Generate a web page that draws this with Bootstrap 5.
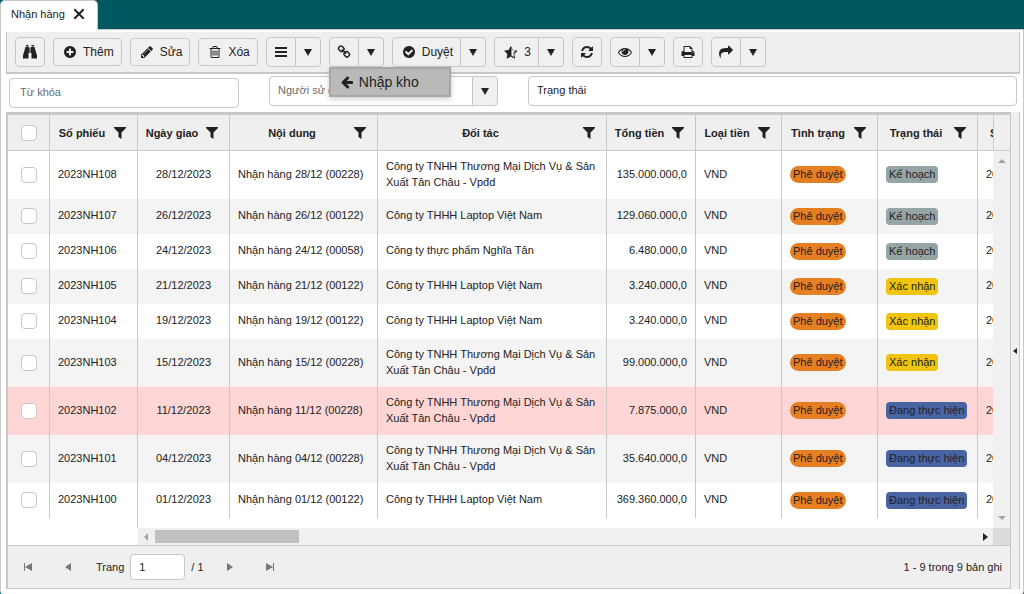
<!DOCTYPE html>
<html lang="vi">
<head>
<meta charset="utf-8">
<meta name="viewport" content="width=device-width, initial-scale=1">
<title>Nhận hàng</title>
<link href="https://cdn.jsdelivr.net/npm/bootstrap@5.3.0/dist/css/bootstrap.min.css" rel="stylesheet">
<style>
:root{--line:#c8c8c8;--panel:#efefef;--ink:#222;--teal:#005961}
body{font-family:"Liberation Sans",Arial,sans-serif;font-size:11px;line-height:16px;color:var(--ink);background:var(--teal)}
svg{display:block;fill:currentColor;flex:none}
.ic{width:14px;height:14px}
.tabs-bar{height:30px;margin-bottom:-1px;z-index:1}
.tab-item{width:98px;padding:0 12px 3px 10px;background:#fff;border:1px solid var(--line);border-bottom:0;border-radius:5px 5px 0 0}
.tab-item button{width:12px;height:12px}
.work{background:#fff;border:1px solid var(--line);border-radius:0 0 4px 4px;padding:2px 3px 5px 5px}
.tools{background:var(--panel);border:solid var(--line);border-width:0 1px 2px;padding:5px 8px;height:42px}
.tool{height:30px;font-size:12px;line-height:16px;padding:0 7px 0 9px;border:1px solid var(--line);border-radius:4px;background:#f0f0f0;color:var(--ink);display:flex;align-items:center;justify-content:center;gap:6px}
.tool-word{height:28px}
.tool span{padding-bottom:1px}
.tool-sq{width:30px;padding:0}
.btn-group>.tool-drop{width:25px;padding:0}
.btn-group>.tool-sq{flex:none}
.menu-pop{display:block;top:100%;left:0;z-index:5;margin:0;padding:0;min-width:122px;border:0;border-radius:0;box-shadow:0 2px 5px rgba(0,0,0,.2);background:#b9b9b9}
.menu-pop .dropdown-item{display:flex;align-items:center;gap:5px;height:30px;padding:0 9px;font-size:14px;line-height:18px;color:var(--ink);background:#b9b9b9;border:2px solid #a8a8a8}
.filters{background:#fff;padding:2px 3px 4px 3px;height:38px;gap:30px}
.filters .field{width:230px}
.fld{height:30px;min-height:0;padding:0 10px 2px;font-size:11px;line-height:16px;color:var(--ink);border:1px solid var(--line);border-radius:4px;background:#fff}
.fld::placeholder{color:#6c6c6c;opacity:1}
.fld.ink::placeholder{color:var(--ink)}
.field-a{margin-top:2px}
.field .fld{padding-left:8px}
.field-a .fld{padding-left:10px}
.filters .field-b{width:229px}
.filters .tool-drop{width:25px;padding:0}
.grid-wrap{border-left:1px solid var(--line)}
.grid-box{border:solid var(--line);border-width:3px 1px 1px}
.grid-view{overflow:hidden;background:#fff}
.data{width:1120px;table-layout:fixed;border-collapse:separate;border-spacing:0}
.data th,.data td{border-right:1px solid var(--line)}
.data th{height:36px;padding:0;background:var(--panel);border-bottom:1px solid var(--line);font-weight:700;vertical-align:middle}
.th-in{padding-right:11px}
.th-in span{flex:1;text-align:center;white-space:nowrap}
.data td{height:35px;padding:0 8px 1px;vertical-align:middle}
.data tr.tall td{height:48px}
.data td.txt,.data tr.tall td.txt{padding-bottom:3px}
.data tbody tr:nth-child(even){background:#f4f4f4}
.data tbody tr.late{background:#ffd6d6}
.form-check-input.tick{float:none;display:block;width:16px;height:16px;margin:0 0 0 5px;border:1px solid #c8c8c8;border-radius:4px;background-color:#fff}
.data th .tick{margin-left:13px}
.tag{display:block;width:fit-content;height:17px;padding:0 3px;line-height:17px;border-radius:4px;white-space:nowrap}
.tag-round{border-radius:9px;background:#e67e22}
.tag-plan{background:#95a5a6}.tag-ok{background:#f1c40f}.tag-run{background:#4864a3}
.vbar{width:17px;background:#f0f0f0}
.vbar-top{height:36px;background:var(--panel);border-left:1px solid var(--line);border-bottom:1px solid var(--line)}
.dim{color:#a3a3a3}
.lock{width:130px;border-right:1px solid var(--line);background:#fff}
.pad-row{height:10px;background:#fff}
.hbar{height:17px;background:#f0f0f0}
.hbar .space{width:130px;background:#fff}
.thumb{width:17%;height:13px;background:#c1c1c1}
.corner{width:17px;background:#dcdcdc}
.pager{height:43px;background:var(--panel);border-top:1px solid var(--line)}
.pager label,.pager span{padding-bottom:1px}
.pg{width:32px;height:24px;color:#777}
.pager .page-no{width:55px;height:26px;padding:0 8px 1px;margin:0 2px 0 6px}
.split-bar{width:9px;background:var(--panel);border-right:1px solid var(--line)}
</style>
</head>
<body class="min-vh-100 d-flex flex-column">
<svg width="0" height="0" class="position-absolute" aria-hidden="true">
<symbol id="i-caret" viewBox="0 0 8 8"><path d="M0 1h8L4 8z"/></symbol>
<symbol id="i-filter" viewBox="0 0 12 12"><path d="M0 0h12v1L7.500 5.500V12L4.500 10V5.500L0 1z"/></symbol>
<symbol id="i-bino" viewBox="0 0 14 14"><path d="M3 0h2.500v1.500H3zM8.500 0H11v1.500H8.500zM2.500 2H6V8H5.500V13.500H0V10.500zM8 2h3.500L14 10.500V13.500H8.500V8H8zM6.400 2.500h1.200v5.500H6.400z"/></symbol>
<symbol id="i-plus" viewBox="0 0 1792 1792"><path d="M1344 960v-128q0-26-19-45t-45-19h-256v-256q0-26-19-45t-45-19h-128q-26 0-45 19t-19 45v256h-256q-26 0-45 19t-19 45v128q0 26 19 45t45 19h256v256q0 26 19 45t45 19h128q26 0 45-19t19-45v-256h256q26 0 45-19t19-45zm320-64q0 209-103 385.500t-279.500 279.500-385.500 103-385.500-103-279.500-279.500-103-385.500 103-385.500 279.500-279.500 385.500-103 385.500 103 279.500 279.500 103 385.500z"/></symbol>
<symbol id="i-check" viewBox="0 0 1792 1792"><path d="M1412 734q0-28-18-46l-91-90q-19-19-45-19t-45 19l-408 407-226-226q-19-19-45-19t-45 19l-91 90q-18 18-18 46 0 27 18 45l362 362q19 19 45 19 27 0 46-19l543-543q18-18 18-45zm252 162q0 209-103 385.500t-279.500 279.500-385.500 103-385.500-103-279.500-279.500-103-385.500 103-385.500 279.500-279.500 385.500-103 385.500 103 279.500 279.500 103 385.500z"/></symbol>
<symbol id="i-pencil" viewBox="0 0 1792 1792"><path d="M491 1536l91-91-235-235-91 91v107h128v128h107zm523-928q0-22-22-22-10 0-17 7l-542 542q-7 7-7 17 0 22 22 22 10 0 17-7l542-542q7-7 7-17zm-54-192l416 416-832 832h-416v-416zm683 96q0 53-37 90l-166 166-416-416 166-165q36-38 90-38 53 0 91 38l235 234q37 39 37 91z"/></symbol>
<symbol id="i-trash" viewBox="0 0 1792 1792"><path d="M704 736v576q0 14-9 23t-23 9h-64q-14 0-23-9t-9-23v-576q0-14 9-23t23-9h64q14 0 23 9t9 23zm256 0v576q0 14-9 23t-23 9h-64q-14 0-23-9t-9-23v-576q0-14 9-23t23-9h64q14 0 23 9t9 23zm256 0v576q0 14-9 23t-23 9h-64q-14 0-23-9t-9-23v-576q0-14 9-23t23-9h64q14 0 23 9t9 23zm128 724v-948h-896v948q0 22 7 40.500t14.500 27 10.500 8.500h832q3 0 10.500-8.500t14.500-27 7-40.500zm-672-1076h448l-48-117q-7-9-17-11h-317q-10 2-17 11zm928 32v64q0 14-9 23t-23 9h-96v948q0 83-47 143.500t-113 60.500h-832q-66 0-113-58.500t-47-141.500v-952h-96q-14 0-23-9t-9-23v-64q0-14 9-23t23-9h309l70-167q15-37 54-63t79-26h320q40 0 79 26t54 63l70 167h309q14 0 23 9t9 23z"/></symbol>
<symbol id="i-bars" viewBox="0 0 14 14"><path d="M1 2h12v2H1zM1 6h12v2H1zM1 10h12v2H1z"/></symbol>
<symbol id="i-link" viewBox="0 0 1792 1792"><path d="M1520 1216q0-40-28-68l-208-208q-28-28-68-28-42 0-72 32 3 3 19 18.500t21.500 21.500 15 19 13 25.500 3.500 27.500q0 40-28 68t-68 28q-15 0-27.500-3.500t-25.500-13-19-15-21.500-21.500-18.500-19q-33 31-33 73 0 40 28 68l206 207q27 27 68 27 40 0 68-26l147-146q28-28 28-67zm-703-705q0-40-28-68l-206-207q-28-28-68-28-39 0-68 27l-147 146q-28 28-28 67 0 40 28 68l208 208q27 27 68 27 42 0 72-31-3-3-19-18.500t-21.500-21.500-15-19-13-25.500-3.500-27.500q0-40 28-68t68-28q15 0 27.500 3.500t25.500 13 19 15 21.500 21.500 18.500 19q33-31 33-73zm895 705q0 120-85 203l-147 146q-83 83-203 83-121 0-204-85l-206-207q-83-83-83-203 0-123 88-209l-88-88q-86 88-208 88-120 0-204-84l-208-208q-84-84-84-204t85-203l147-146q83-83 203-83 121 0 204 85l206 207q83 83 83 203 0 123-88 209l88 88q86-88 208-88 120 0 204 84l208 208q84 84 84 204z"/></symbol>
<symbol id="i-left" viewBox="0 0 1792 1792"><path d="M1664 896v128q0 53-32.500 90.500t-84.500 37.500h-704l293 294q38 36 38 90t-38 90l-75 76q-37 37-90 37-52 0-91-37l-651-652q-37-37-37-90 0-52 37-91l651-650q38-38 91-38 52 0 90 38l75 74q38 38 38 91t-38 91l-293 293h704q52 0 84.500 37.500t32.500 90.500z"/></symbol>
<symbol id="i-star" viewBox="0 0 1792 1792"><path d="M1250 957l238-232-329-48-41-6-18-38-147-297v1028l36 19 295 155-56-328-8-41zm428-146l-363 354 86 500q5 33-6 51.500t-34 18.500q-17 0-40-12l-449-236-449 236q-23 12-40 12-23 0-34-18.500t-6-51.500l86-500-364-354q-32-32-23-59.500t54-34.500l502-73 225-455q20-41 49-41 28 0 49 41l225 455 502 73q45 7 54 34.500t-24 59.500z"/></symbol>
<symbol id="i-refresh" viewBox="0 0 1792 1792"><path d="M1639 1056q0 5-1 7-64 268-268 434.500t-478 166.500q-146 0-282.500-55t-243.500-157l-129 129q-19 19-45 19t-45-19-19-45v-448q0-26 19-45t45-19h448q26 0 45 19t19 45-19 45l-137 137q71 66 161 102t187 36q134 0 250-65t186-179q11-17 53-117 8-23 30-23h192q13 0 22.500 9.500t9.500 22.500zm25-800v448q0 26-19 45t-45 19h-448q-26 0-45-19t-19-45 19-45l138-138q-148-137-349-137-134 0-250 65t-186 179q-11 17-53 117-8 23-30 23h-199q-13 0-22.500-9.500t-9.500-22.500v-7q65-268 270-434.500t480-166.500q146 0 284 55.500t245 156.500l130-129q19-19 45-19t45 19 19 45z"/></symbol>
<symbol id="i-eye" viewBox="0 0 1792 1792"><path d="M1664 960q-152-236-381-353 61 104 61 225 0 185-131.500 316.500t-316.500 131.500-316.500-131.500-131.500-316.500q0-121 61-225-229 117-381 353 133 205 333.500 326.500t434.500 121.500 434.500-121.500 333.500-326.500zm-720-384q0-20-14-34t-34-14q-125 0-214.500 89.500t-89.500 214.500q0 20 14 34t34 14 34-14 14-34q0-86 61-147t147-61q20 0 34-14t14-34zm848 384q0 34-20 69-140 230-376.500 368.500t-499.500 138.500-499.500-139-376.500-368q-20-35-20-69t20-69q140-229 376.500-368t499.500-139 499.500 139 376.500 368q20 35 20 69z"/></symbol>
<symbol id="i-print" viewBox="0 0 1792 1792"><path d="M448 1536h896v-256h-896v256zm0-640h896v-384h-160q-40 0-68-28t-28-68v-160h-640v640zm1152 64q0-26-19-45t-45-19-45 19-19 45 19 45 45 19 45-19 19-45zm128 0v416q0 13-9.500 22.500t-22.500 9.500h-224v160q0 40-28 68t-68 28h-960q-40 0-68-28t-28-68v-160h-224q-13 0-22.500-9.500t-9.500-22.500v-416q0-79 56.500-135.500t135.500-56.500h64v-544q0-40 28-68t68-28h672q40 0 88 20t76 48l152 152q28 28 48 76t20 88v256h64q79 0 135.500 56.500t56.500 135.500z"/></symbol>
<symbol id="i-share" viewBox="0 0 1792 1792"><path d="M1792 640q0 26-19 45l-512 512q-19 19-45 19t-45-19-19-45v-256h-224q-98 0-175.500 6t-154 21.500-133 42.500-105.500 69.500-80 101-48.500 138.500-17.500 181q0 55 5 123 0 6 2.500 23.500t2.500 26.500q0 15-8.500 25t-23.500 10q-16 0-28-17-7-9-13-22t-13.500-30-10.500-24q-127-285-127-451 0-199 53-333 162-403 875-403h224v-256q0-26 19-45t45-19 45 19l512 512q19 19 19 45z"/></symbol>
</svg>

<nav class="tabs-bar d-flex position-relative">
  <div class="tab-item d-flex align-items-center justify-content-between">
    <span>Nhận hàng</span>
    <button type="button" class="btn p-0 border-0 d-flex" aria-label="Đóng"><svg width="12" height="12" viewBox="0 0 12 12"><path d="M2 2l8 8M10 2l-8 8" stroke="#222" stroke-width="2" stroke-linecap="square"/></svg></button>
  </div>
</nav>

<main class="work flex-fill d-flex flex-column">
  <div class="tools d-flex align-items-center gap-2">
    <button type="button" class="tool tool-sq" aria-label="Tìm"><svg class="ic"><use href="#i-bino"/></svg></button>
    <button type="button" class="tool tool-word"><svg class="ic"><use href="#i-plus"/></svg><span>Thêm</span></button>
    <button type="button" class="tool tool-word"><svg class="ic"><use href="#i-pencil"/></svg><span>Sửa</span></button>
    <button type="button" class="tool tool-word"><svg class="ic"><use href="#i-trash"/></svg><span>Xóa</span></button>
    <div class="btn-group">
      <button type="button" class="tool tool-sq rounded-end-0" aria-label="Danh mục"><svg class="ic"><use href="#i-bars"/></svg></button>
      <button type="button" class="tool tool-drop rounded-start-0 border-start-0" aria-label="Mở danh mục"><svg width="8" height="8"><use href="#i-caret"/></svg></button>
    </div>
    <div class="btn-group">
      <button type="button" class="tool tool-sq rounded-end-0" aria-label="Liên kết"><svg class="ic"><use href="#i-link"/></svg></button>
      <button type="button" class="tool tool-drop rounded-start-0 border-start-0" aria-label="Mở liên kết" aria-expanded="true"><svg width="8" height="8"><use href="#i-caret"/></svg></button>
      <div class="dropdown-menu menu-pop">
        <button type="button" class="dropdown-item"><svg class="ic"><use href="#i-left"/></svg>Nhập kho</button>
      </div>
    </div>
    <div class="btn-group">
      <button type="button" class="tool rounded-end-0"><svg class="ic"><use href="#i-check"/></svg><span>Duyệt</span></button>
      <button type="button" class="tool tool-drop rounded-start-0 border-start-0" aria-label="Mở duyệt"><svg width="8" height="8"><use href="#i-caret"/></svg></button>
    </div>
    <div class="btn-group">
      <button type="button" class="tool rounded-end-0"><svg class="ic"><use href="#i-star"/></svg><span>3</span></button>
      <button type="button" class="tool tool-drop rounded-start-0 border-start-0" aria-label="Mở đánh dấu"><svg width="8" height="8"><use href="#i-caret"/></svg></button>
    </div>
    <button type="button" class="tool tool-sq" aria-label="Làm mới"><svg class="ic"><use href="#i-refresh"/></svg></button>
    <div class="btn-group">
      <button type="button" class="tool tool-sq rounded-end-0" aria-label="Xem"><svg class="ic"><use href="#i-eye"/></svg></button>
      <button type="button" class="tool tool-drop rounded-start-0 border-start-0" aria-label="Mở xem"><svg width="8" height="8"><use href="#i-caret"/></svg></button>
    </div>
    <button type="button" class="tool tool-sq" aria-label="In"><svg class="ic"><use href="#i-print"/></svg></button>
    <div class="btn-group">
      <button type="button" class="tool tool-sq rounded-end-0" aria-label="Chia sẻ"><svg class="ic"><use href="#i-share"/></svg></button>
      <button type="button" class="tool tool-drop rounded-start-0 border-start-0" aria-label="Mở chia sẻ"><svg width="8" height="8"><use href="#i-caret"/></svg></button>
    </div>
  </div>

  <div class="filters d-flex align-items-start">
    <div class="field field-a"><input type="text" class="form-control fld" placeholder="Từ khóa" aria-label="Từ khóa"></div>
    <div class="field field-b d-flex">
      <input type="text" class="form-control fld rounded-end-0" placeholder="Người sử dụng" aria-label="Người sử dụng">
      <button type="button" class="tool tool-drop rounded-start-0 border-start-0 flex-shrink-0" aria-label="Chọn người sử dụng"><svg width="8" height="8"><use href="#i-caret"/></svg></button>
    </div>
    <div class="field flex-fill"><input type="text" class="form-control fld ink" placeholder="Trạng thái" aria-label="Trạng thái"></div>
  </div>

  <div class="grid-wrap flex-fill d-flex">
    <div class="grid-box flex-fill d-flex flex-column overflow-hidden">
      <div class="d-flex">
        <div class="grid-view flex-fill">
          <table class="data">
            <colgroup><col style="width:42px"><col style="width:88px"><col style="width:92px"><col style="width:148px"><col style="width:229px"><col style="width:89px"><col style="width:86px"><col style="width:96px"><col style="width:100px"><col></colgroup>
            <thead>
              <tr>
                <th><input type="checkbox" class="form-check-input tick" aria-label="Chọn tất cả"></th>
                <th><div class="th-in d-flex align-items-center"><span>Số phiếu</span><svg width="12" height="12"><use href="#i-filter"/></svg></div></th>
                <th><div class="th-in d-flex align-items-center"><span>Ngày giao</span><svg width="12" height="12"><use href="#i-filter"/></svg></div></th>
                <th><div class="th-in d-flex align-items-center"><span>Nội dung</span><svg width="12" height="12"><use href="#i-filter"/></svg></div></th>
                <th><div class="th-in d-flex align-items-center"><span>Đối tác</span><svg width="12" height="12"><use href="#i-filter"/></svg></div></th>
                <th><div class="th-in d-flex align-items-center"><span>Tổng tiền</span><svg width="12" height="12"><use href="#i-filter"/></svg></div></th>
                <th><div class="th-in d-flex align-items-center"><span>Loại tiền</span><svg width="12" height="12"><use href="#i-filter"/></svg></div></th>
                <th><div class="th-in d-flex align-items-center"><span>Tình trạng</span><svg width="12" height="12"><use href="#i-filter"/></svg></div></th>
                <th><div class="th-in d-flex align-items-center"><span>Trạng thái</span><svg width="12" height="12"><use href="#i-filter"/></svg></div></th>
                <th class="text-start"><div class="ms-2 ps-1">Số</div></th>
              </tr>
            </thead>
            <tbody>
              <tr class="tall"><td><input type="checkbox" class="form-check-input tick" aria-label="Chọn 2023NH108"></td><td class="txt">2023NH108</td><td class="txt text-center">28/12/2023</td><td class="txt">Nhận hàng 28/12 (00228)</td><td class="txt">Công ty TNHH Thương Mại Dịch Vụ &amp; Sản Xuất Tân Châu - Vpđd</td><td class="txt text-end">135.000.000,0</td><td class="txt">VND</td><td><span class="tag tag-round">Phê duyệt</span></td><td><span class="tag tag-plan">Kế hoạch</span></td><td class="txt">2023</td></tr>
              <tr><td><input type="checkbox" class="form-check-input tick" aria-label="Chọn 2023NH107"></td><td class="txt">2023NH107</td><td class="txt text-center">26/12/2023</td><td class="txt">Nhận hàng 26/12 (00122)</td><td class="txt">Công ty THHH Laptop Việt Nam</td><td class="txt text-end">129.060.000,0</td><td class="txt">VND</td><td><span class="tag tag-round">Phê duyệt</span></td><td><span class="tag tag-plan">Kế hoạch</span></td><td class="txt">2023</td></tr>
              <tr><td><input type="checkbox" class="form-check-input tick" aria-label="Chọn 2023NH106"></td><td class="txt">2023NH106</td><td class="txt text-center">24/12/2023</td><td class="txt">Nhận hàng 24/12 (00058)</td><td class="txt">Công ty thực phẩm Nghĩa Tân</td><td class="txt text-end">6.480.000,0</td><td class="txt">VND</td><td><span class="tag tag-round">Phê duyệt</span></td><td><span class="tag tag-plan">Kế hoạch</span></td><td class="txt">2023</td></tr>
              <tr><td><input type="checkbox" class="form-check-input tick" aria-label="Chọn 2023NH105"></td><td class="txt">2023NH105</td><td class="txt text-center">21/12/2023</td><td class="txt">Nhận hàng 21/12 (00122)</td><td class="txt">Công ty THHH Laptop Việt Nam</td><td class="txt text-end">3.240.000,0</td><td class="txt">VND</td><td><span class="tag tag-round">Phê duyệt</span></td><td><span class="tag tag-ok">Xác nhận</span></td><td class="txt">2023</td></tr>
              <tr><td><input type="checkbox" class="form-check-input tick" aria-label="Chọn 2023NH104"></td><td class="txt">2023NH104</td><td class="txt text-center">19/12/2023</td><td class="txt">Nhận hàng 19/12 (00122)</td><td class="txt">Công ty THHH Laptop Việt Nam</td><td class="txt text-end">3.240.000,0</td><td class="txt">VND</td><td><span class="tag tag-round">Phê duyệt</span></td><td><span class="tag tag-ok">Xác nhận</span></td><td class="txt">2023</td></tr>
              <tr class="tall"><td><input type="checkbox" class="form-check-input tick" aria-label="Chọn 2023NH103"></td><td class="txt">2023NH103</td><td class="txt text-center">15/12/2023</td><td class="txt">Nhận hàng 15/12 (00228)</td><td class="txt">Công ty TNHH Thương Mại Dịch Vụ &amp; Sản Xuất Tân Châu - Vpđd</td><td class="txt text-end">99.000.000,0</td><td class="txt">VND</td><td><span class="tag tag-round">Phê duyệt</span></td><td><span class="tag tag-ok">Xác nhận</span></td><td class="txt">2023</td></tr>
              <tr class="tall late"><td><input type="checkbox" class="form-check-input tick" aria-label="Chọn 2023NH102"></td><td class="txt">2023NH102</td><td class="txt text-center">11/12/2023</td><td class="txt">Nhận hàng 11/12 (00228)</td><td class="txt">Công ty TNHH Thương Mại Dịch Vụ &amp; Sản Xuất Tân Châu - Vpđd</td><td class="txt text-end">7.875.000,0</td><td class="txt">VND</td><td><span class="tag tag-round">Phê duyệt</span></td><td><span class="tag tag-run">Đang thực hiện</span></td><td class="txt">2023</td></tr>
              <tr class="tall"><td><input type="checkbox" class="form-check-input tick" aria-label="Chọn 2023NH101"></td><td class="txt">2023NH101</td><td class="txt text-center">04/12/2023</td><td class="txt">Nhận hàng 04/12 (00228)</td><td class="txt">Công ty TNHH Thương Mại Dịch Vụ &amp; Sản Xuất Tân Châu - Vpđd</td><td class="txt text-end">35.640.000,0</td><td class="txt">VND</td><td><span class="tag tag-round">Phê duyệt</span></td><td><span class="tag tag-run">Đang thực hiện</span></td><td class="txt">2023</td></tr>
              <tr><td><input type="checkbox" class="form-check-input tick" aria-label="Chọn 2023NH100"></td><td class="txt">2023NH100</td><td class="txt text-center">01/12/2023</td><td class="txt">Nhận hàng 01/12 (00122)</td><td class="txt">Công ty THHH Laptop Việt Nam</td><td class="txt text-end">369.360.000,0</td><td class="txt">VND</td><td><span class="tag tag-round">Phê duyệt</span></td><td><span class="tag tag-run">Đang thực hiện</span></td><td class="txt">2023</td></tr>
            </tbody>
          </table>
          <div class="pad-row"><div class="lock h-100"></div></div>
        </div>
        <div class="vbar flex-shrink-0 d-flex flex-column">
          <div class="vbar-top"></div>
          <div class="dim flex-fill d-flex flex-column justify-content-between align-items-center py-2">
            <svg width="8" height="4" viewBox="0 0 8 4"><path d="M0 4h8L4 0z"/></svg>
            <svg width="8" height="4" viewBox="0 0 8 4"><path d="M0 0h8L4 4z"/></svg>
          </div>
        </div>
      </div>
      <div class="flex-fill bg-white"></div>
      <div class="hbar d-flex">
        <div class="space flex-shrink-0"></div>
        <div class="flex-fill d-flex align-items-center px-1">
          <svg class="dim" width="13" height="8" viewBox="0 0 13 8"><path d="M6 0v8L2 4z"/></svg>
          <div class="thumb"></div>
          <svg class="ms-auto" width="6" height="8" viewBox="0 0 6 8"><path d="M0 0v8l5-4z"/></svg>
        </div>
        <div class="corner flex-shrink-0"></div>
      </div>
      <div class="pager d-flex align-items-center px-1">
        <button type="button" class="pg btn p-0 border-0 d-flex align-items-center justify-content-center" aria-label="Trang đầu"><svg width="8" height="8" viewBox="0 0 8 8"><path d="M0 0h1v8H0zM8 0v8L1 4z"/></svg></button>
        <button type="button" class="pg btn p-0 border-0 d-flex align-items-center justify-content-center ms-2" aria-label="Trang trước"><svg width="8" height="8" viewBox="0 0 8 8"><path d="M7 0v8L1 4z"/></svg></button>
        <label class="ms-2 ps-1" for="page-no">Trang</label>
        <input id="page-no" type="text" class="form-control fld page-no flex-shrink-0" value="1">
        <span class="ps-1">/ 1</span>
        <button type="button" class="pg btn p-0 border-0 d-flex align-items-center justify-content-center ms-2 me-1 ps-1" aria-label="Trang sau"><svg width="8" height="8" viewBox="0 0 8 8"><path d="M1 0v8l6-4z"/></svg></button>
        <button type="button" class="pg btn p-0 border-0 d-flex align-items-center justify-content-center ms-1 ps-1" aria-label="Trang cuối"><svg width="8" height="8" viewBox="0 0 8 8"><path d="M7 0h1v8H7zM0 0v8l7-4z"/></svg></button>
        <span class="ms-auto pe-1">1 - 9 trong 9 bản ghi</span>
      </div>
    </div>
    <div class="split-bar flex-shrink-0 d-flex align-items-center justify-content-center"><svg width="4" height="6" viewBox="0 0 4 6"><path d="M4 0v6L0 3z"/></svg></div>
  </div>
</main>
<script src="https://cdn.jsdelivr.net/npm/bootstrap@5.3.0/dist/js/bootstrap.bundle.min.js"></script>
</body>
</html>
